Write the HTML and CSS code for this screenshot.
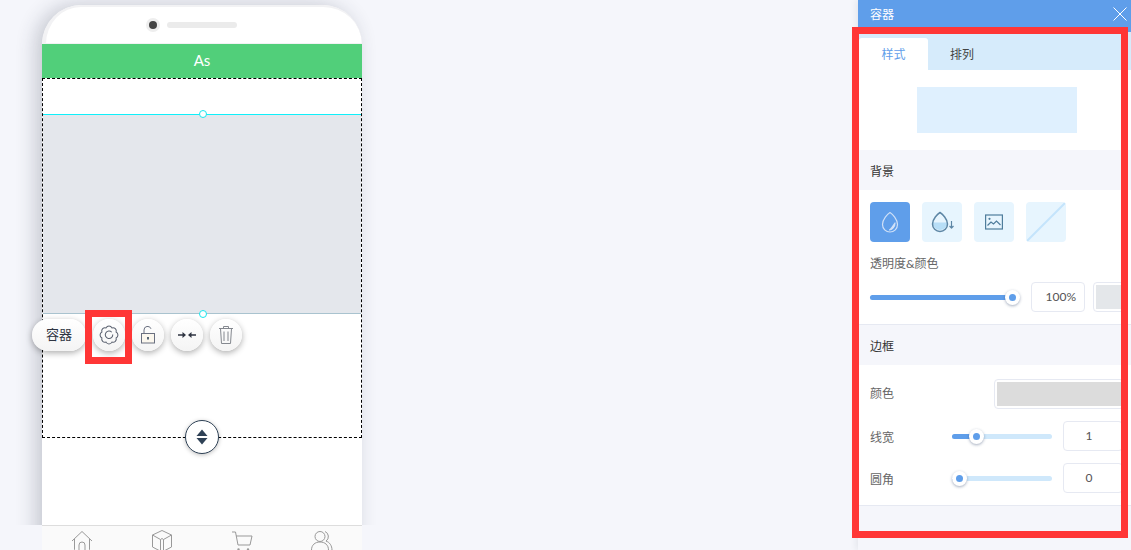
FILE: index.html
```html
<!DOCTYPE html>
<html lang="en">

<head>
    <meta charset="UTF-8" />
    <meta name="viewport" content="width=device-width, initial-scale=1.0" />
    <title>容器</title>
    <link rel="stylesheet" href="styles.css">
</head>

<body>

    <div class="stage">
        <div class="canvas">
            <div class="phone">
                <div class="phone-cap">
                    <span class="camera"></span>
                    <span class="speaker"></span>
                </div>
                <div class="phone-title">As</div>
                <div class="selection">
                    <div class="selection-top"></div>
                    <div class="selection-fill"></div>
                    <span class="handle handle-top"></span>
                    <span class="handle handle-bottom"></span>

                    <div class="toolbar">
                        <span class="tool-pill">容器</span>
                        <span class="tool-btn">
                            <svg width="22" height="22" viewBox="0 0 20 20" fill="none" stroke="#5b6270" stroke-width="0.950">
                                <path d="M12.68 3.53A3 3 0 0 1 16.47 7.32A3 3 0 0 1 16.47 12.68A3 3 0 0 1 12.68 16.47A3 3 0 0 1 7.32 16.47A3 3 0 0 1 3.53 12.68A3 3 0 0 1 3.53 7.32A3 3 0 0 1 7.32 3.53A3 3 0 0 1 12.68 3.53Z" />
                                <path d="M12.500 7.500a3.400 3.400 0 1 0 .9 2" />
                            </svg>
                        </span>
                        <span class="tool-btn">
                            <svg width="20" height="20" viewBox="0 0 20 20" fill="none" stroke="#6a7080" stroke-width="1">
                                <path d="M6 8V5a3.600 3.600 0 0 1 7-1.200" />
                                <rect x="3.500" y="8.500" width="13" height="9.500" fill="#fbf7ee" />
                                <path d="M10 12v2.400" stroke="#2f4256" stroke-width="1.600" />
                            </svg>
                        </span>
                        <span class="tool-btn">
                            <svg width="20" height="12" viewBox="0 0 20 12" fill="#2f3542">
                                <path d="M1 5.200h4.500V3L9 6 5.500 9V6.800H1Z" />
                                <path d="M19 5.200h-4.500V3L11 6l3.500 3V6.800H19Z" />
                            </svg>
                        </span>
                        <span class="tool-btn">
                            <svg width="20" height="20" viewBox="0 0 20 20" fill="none" stroke="#84888f" stroke-width="1">
                                <path d="M3 3.500h14M7.500 3.500V1.500h5v2M4.500 3.500l1 15h9l1-15M8 6.500v9.500M12 6.500v9.500" />
                            </svg>
                        </span>
                        <span class="tool-mark"></span>
                    </div>

                    <span class="sort-btn">
                        <svg width="12" height="16" viewBox="0 0 12 16" fill="#2f4256">
                            <path d="M6 0.500 11.500 7H0.500Z" />
                            <path d="M6 15.500 0.500 9H11.500Z" />
                        </svg>
                    </span>
                </div>
            </div>
        </div>

        <div class="tabbar">
            <span class="tabbar-item">
                <svg width="22" height="24" viewBox="0 0 22 24" fill="none" stroke="#999" stroke-width="1">
                    <path d="M1 11 11 1.500 21 11M3.500 9v10.500a1.500 1.500 0 0 0 1.500 1.500h12a1.500 1.500 0 0 0 1.500-1.500V9M8 21v-6a3 3 0 0 1 6 0v6" />
                </svg>
            </span>
            <span class="tabbar-item">
                <svg width="22" height="24" viewBox="0 0 22 24" fill="none" stroke="#999" stroke-width="1">
                    <path d="M11 0.500 20.500 5v12L11 22 1.500 17V5ZM1.500 5 9.500 9.500 11 8.500 12.500 9.500 20.500 5M9.500 9.500V22M12.500 9.500V22" />
                </svg>
            </span>
            <span class="tabbar-item">
                <svg width="22" height="24" viewBox="0 0 22 24" fill="none" stroke="#999" stroke-width="1">
                    <path d="M1 2h3.500L7 15h12l2-9H5" />
                    <circle cx="7.500" cy="19.500" r="1.200" fill="#999" stroke="none" />
                    <circle cx="17" cy="19.500" r="1.200" fill="#999" stroke="none" />
                </svg>
            </span>
            <span class="tabbar-item">
                <svg width="22" height="24" viewBox="0 0 22 24" fill="none" stroke="#999" stroke-width="1">
                    <circle cx="9" cy="6.500" r="5" />
                    <path d="M0.500 20c0-5 3.500-8 8.500-8s8.500 3 8.500 8M14 1.500a5.500 5.500 0 0 1 1 9.600c3.500 1 6 4.500 6 9" />
                </svg>
            </span>
        </div>
    </div>

    <div class="panel">
        <div class="panel-head">
            <span>容器</span>
            <svg width="14" height="14" viewBox="0 0 14 14" stroke="#fff" stroke-width="1">
                <path d="M0.500 0.500 13.500 13.500M13.500 0.500 0.500 13.500" />
            </svg>
        </div>

        <div class="tabs">
            <span class="tab active">样式</span>
            <span class="tab">排列</span>
        </div>

        <div class="preview-wrap">
            <div class="preview"></div>
        </div>

        <div class="section-title">背景</div>
        <div class="section">
            <div class="fill-types">
                <span class="fill-type selected">
                    <svg width="20" height="22" viewBox="0 0 20 22" fill="none" stroke="#cfe0f7" stroke-width="1.200" stroke-linejoin="round">
                        <path d="M10 1.500C12.500 3 17.500 8.500 17.500 13.500a7.500 7.500 0 0 1-15 0C2.500 8.500 7.500 3 10 1.500Z" />
                        <path d="M15 12c0 3.500-2.500 6.500-5.500 7 2-1.500 3.500-4 5.500-7Z" fill="#cfe0f7" />
                    </svg>
                </span>
                <span class="fill-type">
                    <svg width="24" height="22" viewBox="0 0 24 22" fill="none" stroke="#5d86a5" stroke-width="1.500" stroke-linejoin="round">
                        <path d="M2.500 11.500h15a7.500 7.500 0 0 1-15 0Z" fill="#b7def7" stroke="none" />
                        <path d="M10 1.500C12.500 3 17.500 8 17.500 13a7.500 7.500 0 0 1-15 0C2.500 8 7.500 3 10 1.500Z" />
                        <path d="M21.500 10v7M19.500 15l2 2 2-2" stroke-width="1.200" />
                    </svg>
                </span>
                <span class="fill-type">
                    <svg width="18" height="16" viewBox="0 0 18 16" fill="none" stroke="#4f7d9c" stroke-width="1.200">
                        <rect x="0.600" y="1" width="16.800" height="14" />
                        <path d="M2.500 11.500 6 8l2.500 2L11.500 7l4 4" />
                        <circle cx="4.500" cy="4.800" r="1.100" fill="#4f7d9c" stroke="none" />
                    </svg>
                </span>
                <span class="fill-type">
                    <svg width="40" height="40" viewBox="0 0 40 40" stroke="#c4e4fc" stroke-width="2">
                        <path d="M40 0 0 40" />
                    </svg>
                </span>
            </div>
            <div class="field-label">透明度&amp;颜色</div>
            <div class="opacity-row">
                <div class="slider slider-wide">
                    <div class="slider-fill" style="width: 100%"></div>
                    <span class="thumb" style="left: 100%"></span>
                </div>
                <span class="value value-percent">100%</span>
                <span class="swatch swatch-light"><i></i></span>
            </div>
        </div>

        <div class="section-title">边框</div>
        <div class="section section-border">
            <div class="row row-color">
                <span class="row-label">颜色</span>
                <span class="swatch swatch-gray"><i></i></span>
            </div>
            <div class="row">
                <span class="row-label">线宽</span>
                <div class="slider">
                    <div class="slider-fill" style="width: 24%"></div>
                    <span class="thumb" style="left: 24%"></span>
                </div>
                <span class="value value-num">1</span>
            </div>
            <div class="row">
                <span class="row-label">圆角</span>
                <div class="slider">
                    <div class="slider-fill" style="width: 7%"></div>
                    <span class="thumb" style="left: 7%"></span>
                </div>
                <span class="value value-num">0</span>
            </div>
        </div>

        <div class="panel-mark"></div>
    </div>

</body>

</html>
```

FILE: styles.css
```css
* {
    box-sizing: border-box;
}

body {
    font-family: Lato, 'Noto Sans CJK SC', sans-serif;
    margin: 0;
    height: 550px;
    overflow: hidden;
    background: #f5f6fb;
    display: flex;
    justify-content: space-between;
    font-size: 12px;
    color: #333;
}

/* left side: the phone */
.stage {
    width: 380px;
}

.canvas {
    height: 525px;
    padding: 5px 0 0 42px;
    overflow: hidden;
}

.phone {
    width: 320px;
    height: 600px;
    background: #fff;
    border-radius: 40px 40px 0 0;
    box-shadow: -6px 0 20px rgba(40, 50, 70, 0.24);
    position: relative;
}

.phone-cap {
    height: 39px;
    border-style: solid;
    border-color: #f2f2f4;
    border-width: 2px 0 1px 4px;
    border-radius: 40px 40px 0 0;
    display: flex;
    align-items: center;
    padding: 0 0 0 100px;
    gap: 7px;
}

.camera {
    width: 14px;
    height: 14px;
    border-radius: 50%;
    background: #eee;
    border: 3px solid #eee;
    position: relative;
}

.camera::after {
    content: "";
    display: block;
    width: 8px;
    height: 8px;
    border-radius: 50%;
    background: #444;
}

.speaker {
    width: 70px;
    height: 6px;
    border-radius: 3px;
    background: #ebebeb;
}

.phone-title {
    height: 34px;
    background: #51cf7a;
    color: #fff;
    font-size: 15px;
    line-height: 33px;
    text-align: center;
}

.selection {
    height: 360px;
    border: 1px dashed #000;
    position: relative;
}

.selection-top {
    height: 36px;
    border-bottom: 1px solid #0ff0fa;
}

.selection-fill {
    height: 199px;
    background: #e4e7ec;
    border-bottom: 1px solid #a9c3cf;
}

.handle {
    position: absolute;
    left: 156px;
    width: 8px;
    height: 8px;
    border-radius: 50%;
    background: #fff;
    border: 1px solid #19e6ee;
}

.handle-top {
    top: 31px;
}

.handle-bottom {
    top: 231px;
}

.toolbar {
    position: absolute;
    left: -11px;
    top: 240px;
    display: flex;
    gap: 7px;
}

.tool-pill,
.tool-btn {
    height: 32px;
    background: linear-gradient(#fff, #f4f4f4);
    box-shadow: 0 2px 6px rgba(0, 0, 0, 0.32);
    display: flex;
    align-items: center;
    justify-content: center;
}

.tool-pill {
    width: 54px;
    padding-bottom: 3px;
    border-radius: 16px;
    font-size: 13px;
    color: #2f3542;
}

.tool-btn {
    width: 32px;
    border-radius: 50%;
}

.tool-mark {
    position: absolute;
    left: 53px;
    top: -9px;
    width: 47px;
    height: 54px;
    border: 7px solid #ff3636;
}

.sort-btn {
    position: absolute;
    left: 142px;
    top: 341px;
    width: 34px;
    height: 34px;
    border-radius: 50%;
    background: #fff;
    border: 1px solid #2f4256;
    box-shadow: 0 1px 4px rgba(0, 0, 0, 0.25);
    display: flex;
    align-items: center;
    justify-content: center;
}

.tabbar {
    margin-left: 42px;
    width: 320px;
    height: 25px;
    background: #fafafa;
    border-top: 1px solid #ddd;
    display: flex;
    overflow: hidden;
}

.tabbar-item {
    flex: 1;
    display: flex;
    justify-content: center;
    padding-top: 4px;
}

/* right side: the settings panel */
.panel {
    width: 273px;
    height: 550px;
    background: #f5f6fb;
    box-shadow: -2px 0 6px rgba(40, 50, 70, 0.08);
    position: relative;
}

.panel-head {
    height: 32px;
    padding: 0 4px 5px 12px;
    background: #5f9eea;
    color: #fff;
    display: flex;
    align-items: center;
    justify-content: space-between;
}

.tabs {
    height: 38px;
    background: #d6ebfb;
    display: flex;
    align-items: flex-end;
    padding-left: 1px;
}

.tab {
    width: 69px;
    height: 32px;
    line-height: 33px;
    text-align: center;
    border-radius: 3px 3px 0 0;
    color: #444;
}

.tab + .tab {
    width: 68px;
}

.tab.active {
    background: #fff;
    color: #5f9eea;
}

.preview-wrap {
    height: 80px;
    background: #fff;
    padding: 17px 0 0 59px;
}

.preview {
    width: 160px;
    height: 46px;
    background: #dff0fe;
}

.section-title {
    height: 40px;
    line-height: 43px;
    padding-left: 12px;
    color: #333;
}

.section {
    height: 135px;
    background: #fff;
    border-bottom: 1px solid #e6e9f2;
    padding: 12px 0 0 12px;
}

.section-border {
    height: 141px;
    padding-top: 14px;
}

.fill-types {
    display: flex;
    gap: 12px;
}

.fill-type {
    width: 40px;
    height: 40px;
    border-radius: 4px;
    background: #e7f5fe;
    display: flex;
    align-items: center;
    justify-content: center;
    overflow: hidden;
}

.fill-type.selected {
    background: #5f9eea;
}

.field-label {
    margin-top: 12px;
    height: 20px;
    line-height: 20px;
    color: #666;
}

.opacity-row {
    margin-top: 8px;
    display: flex;
    align-items: center;
}

.slider {
    width: 100px;
    height: 5px;
    border-radius: 3px;
    background: #cfe8fb;
    flex-shrink: 0;
    position: relative;
}

.slider-wide {
    width: 142px;
    margin-right: 19px;
}

.slider-fill {
    height: 100%;
    border-radius: 3px;
    background: #5f9eea;
}

.thumb {
    position: absolute;
    top: 50%;
    width: 15px;
    height: 15px;
    margin: -7.500px 0 0 -7.500px;
    border-radius: 50%;
    background: #fff;
    box-shadow: 0 1px 3px rgba(50, 70, 110, 0.45);
}

.thumb::after {
    content: "";
    position: absolute;
    left: 4px;
    top: 4px;
    width: 7px;
    height: 7px;
    border-radius: 50%;
    background: #5f9eea;
}

.value {
    height: 30px;
    line-height: 28px;
    background: #fff;
    border: 1px solid #e6e9f2;
    border-radius: 4px;
    flex-shrink: 0;
}

.value-percent {
    width: 54px;
    padding-right: 8px;
    text-align: right;
    color: #555;
}

.value-num {
    width: 60px;
    margin-left: 11px;
    padding-right: 8px;
    text-align: center;
    color: #555;
}

.swatch {
    height: 30px;
    padding: 2px;
    background: #fff;
    border: 1px solid #e6e9f2;
    border-radius: 4px;
    flex-shrink: 0;
    display: block;
    margin-left: 8px;
}

.swatch i {
    display: block;
    height: 100%;
}

.swatch-light {
    width: 32px;
}

.swatch-light i {
    background: #e4e7ea;
}

.swatch-gray {
    width: 130px;
    margin-left: 100px;
}

.swatch-gray i {
    background: #dcdcdc;
}

.row {
    display: flex;
    align-items: center;
    height: 30px;
    margin-bottom: 12px;
}

.row-label {
    width: 82px;
    flex-shrink: 0;
    color: #666;
}

.row-color .row-label {
    width: 24px;
    padding-bottom: 3px;
}

.panel-mark {
    position: absolute;
    left: -6px;
    top: 27px;
    width: 276px;
    height: 511px;
    border: 7px solid #ff3636;
}
```
